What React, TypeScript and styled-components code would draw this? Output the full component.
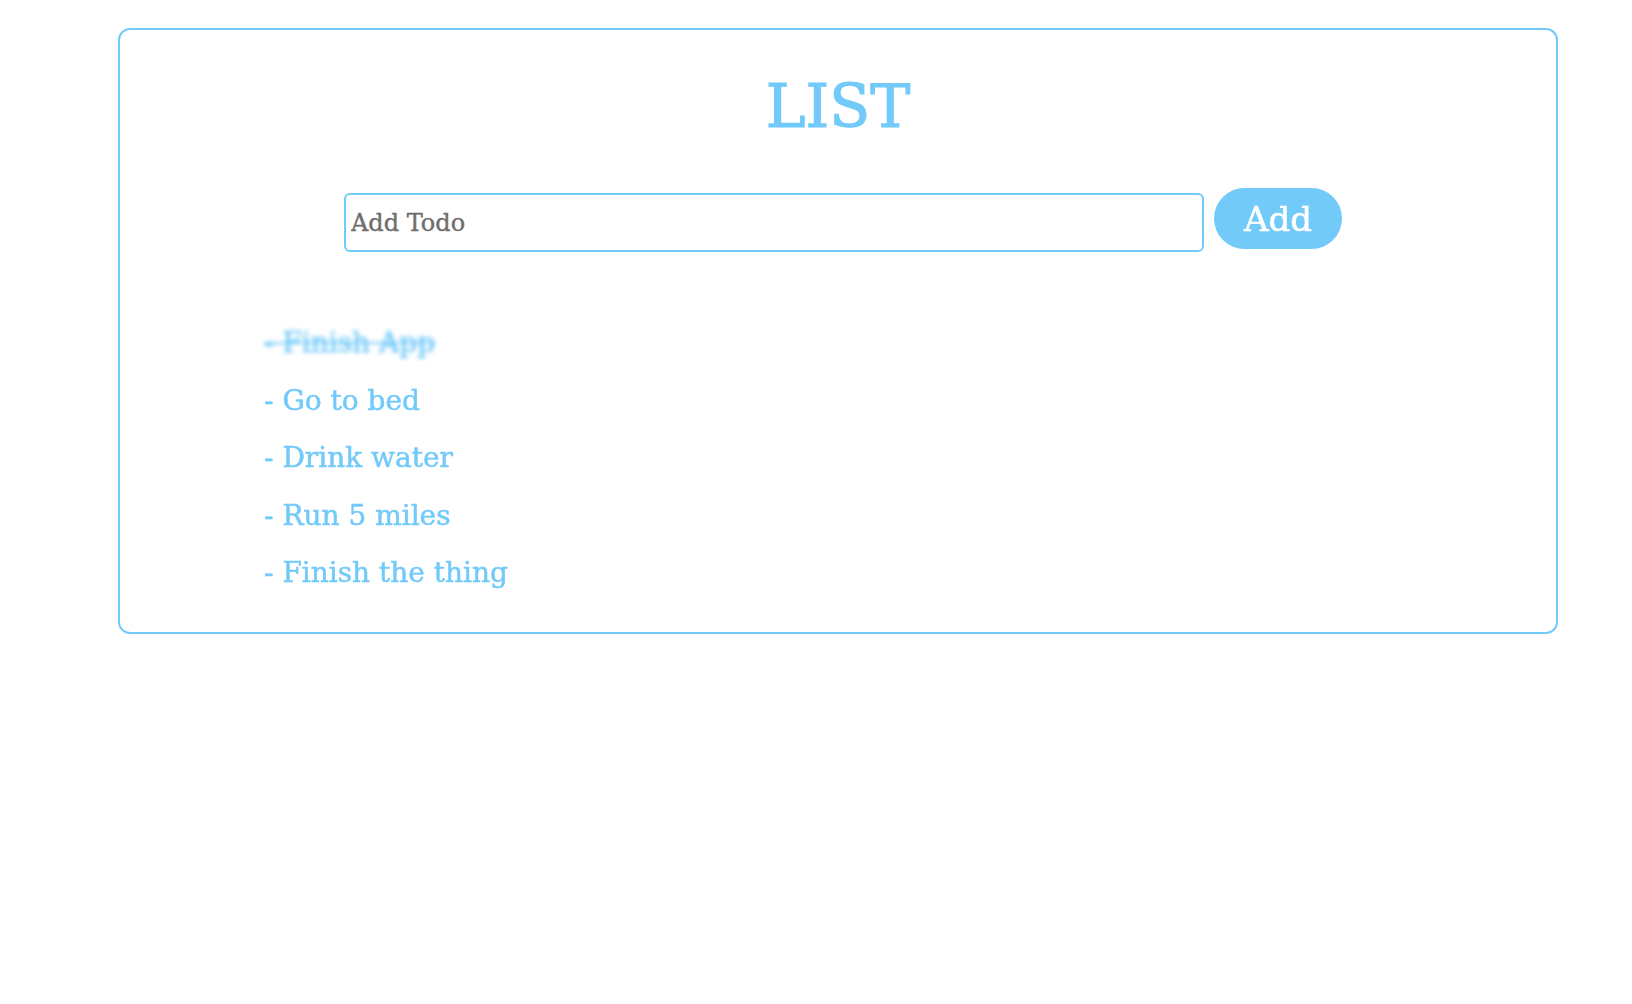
import React, { useState } from "react";
import styled, { createGlobalStyle } from "styled-components";

const blue = "#72caf9";

const GlobalStyle = createGlobalStyle`
	html, body {
		margin: 0;
		padding: 0;
		background: #ffffff;
	}
	body {
		font-family: Georgia, "DejaVu Serif", serif;
	}
`;

interface Todo {
	id: number;
	text: string;
	done: boolean;
}

const initialTodos: Todo[] = [
	{ id: 1, text: "Finish App", done: true },
	{ id: 2, text: "Go to bed", done: false },
	{ id: 3, text: "Drink water", done: false },
	{ id: 4, text: "Run 5 miles", done: false },
	{ id: 5, text: "Finish the thing", done: false },
];

const Card = styled.div`
	box-sizing: border-box;
	margin: 28px 74px 0 118px;
	padding: 46px 0 30px;
	border: 2px solid ${blue};
	border-radius: 12px;
`;

const Title = styled.h1`
	margin: 0;
	font-size: 60px;
	line-height: 60px;
	font-weight: normal;
	text-align: center;
	color: ${blue};
	-webkit-text-stroke: 1.2px ${blue};
`;

const Form = styled.form`
	display: flex;
	align-items: flex-start;
	justify-content: center;
	gap: 10px;
	margin-top: 52px;
	padding-left: 10px;
`;

const Input = styled.input`
	box-sizing: border-box;
	width: 860px;
	height: 59px;
	margin-top: 5px;
	padding: 0 5px;
	border: 2px solid ${blue};
	border-radius: 6px;
	font-family: Georgia, "DejaVu Serif", serif;
	font-size: 24px;
	color: #333;
	caret-color: ${blue};
	outline: none;

	&::placeholder {
		color: #6e6e6e;
		-webkit-text-stroke: 0.4px #6e6e6e;
	}
`;

const AddButton = styled.button`
	box-sizing: border-box;
	width: 128px;
	height: 61px;
	padding: 0;
	border: none;
	border-radius: 31px;
	background: ${blue};
	color: #ffffff;
	font-family: Georgia, "DejaVu Serif", serif;
	font-size: 34px;
	-webkit-text-stroke: 0.6px #ffffff;
	cursor: pointer;
`;

const List = styled.ul`
	list-style: none;
	margin: 62px 0 0;
	padding: 0 0 0 144px;
`;

const Item = styled.li<{ $done: boolean }>`
	font-size: 28px;
	line-height: 57.5px;
	color: ${blue};
	-webkit-text-stroke: 0.5px ${blue};
	cursor: pointer;
	text-decoration: ${(p) => (p.$done ? "line-through" : "none")};
	filter: ${(p) => (p.$done ? "blur(2px)" : "none")};
`;

export default function App() {
	const [todos, setTodos] = useState<Todo[]>(initialTodos);
	const [text, setText] = useState("");

	const add = (e: React.FormEvent) => {
		e.preventDefault();
		if (!text.trim()) return;
		setTodos([...todos, { id: Date.now(), text: text.trim(), done: false }]);
		setText("");
	};

	const toggle = (id: number) =>
		setTodos(todos.map((t) => (t.id === id ? { ...t, done: !t.done } : t)));

	return (
		<>
			<GlobalStyle />
			<Card>
				<Title>LIST</Title>
				<Form onSubmit={add}>
					<Input
						autoFocus
						placeholder="Add Todo"
						value={text}
						onChange={(e) => setText(e.target.value)}
					/>
					<AddButton type="submit">Add</AddButton>
				</Form>
				<List>
					{todos.map((t) => (
						<Item key={t.id} $done={t.done} onClick={() => toggle(t.id)}>
							- {t.text}
						</Item>
					))}
				</List>
			</Card>
		</>
	);
}
